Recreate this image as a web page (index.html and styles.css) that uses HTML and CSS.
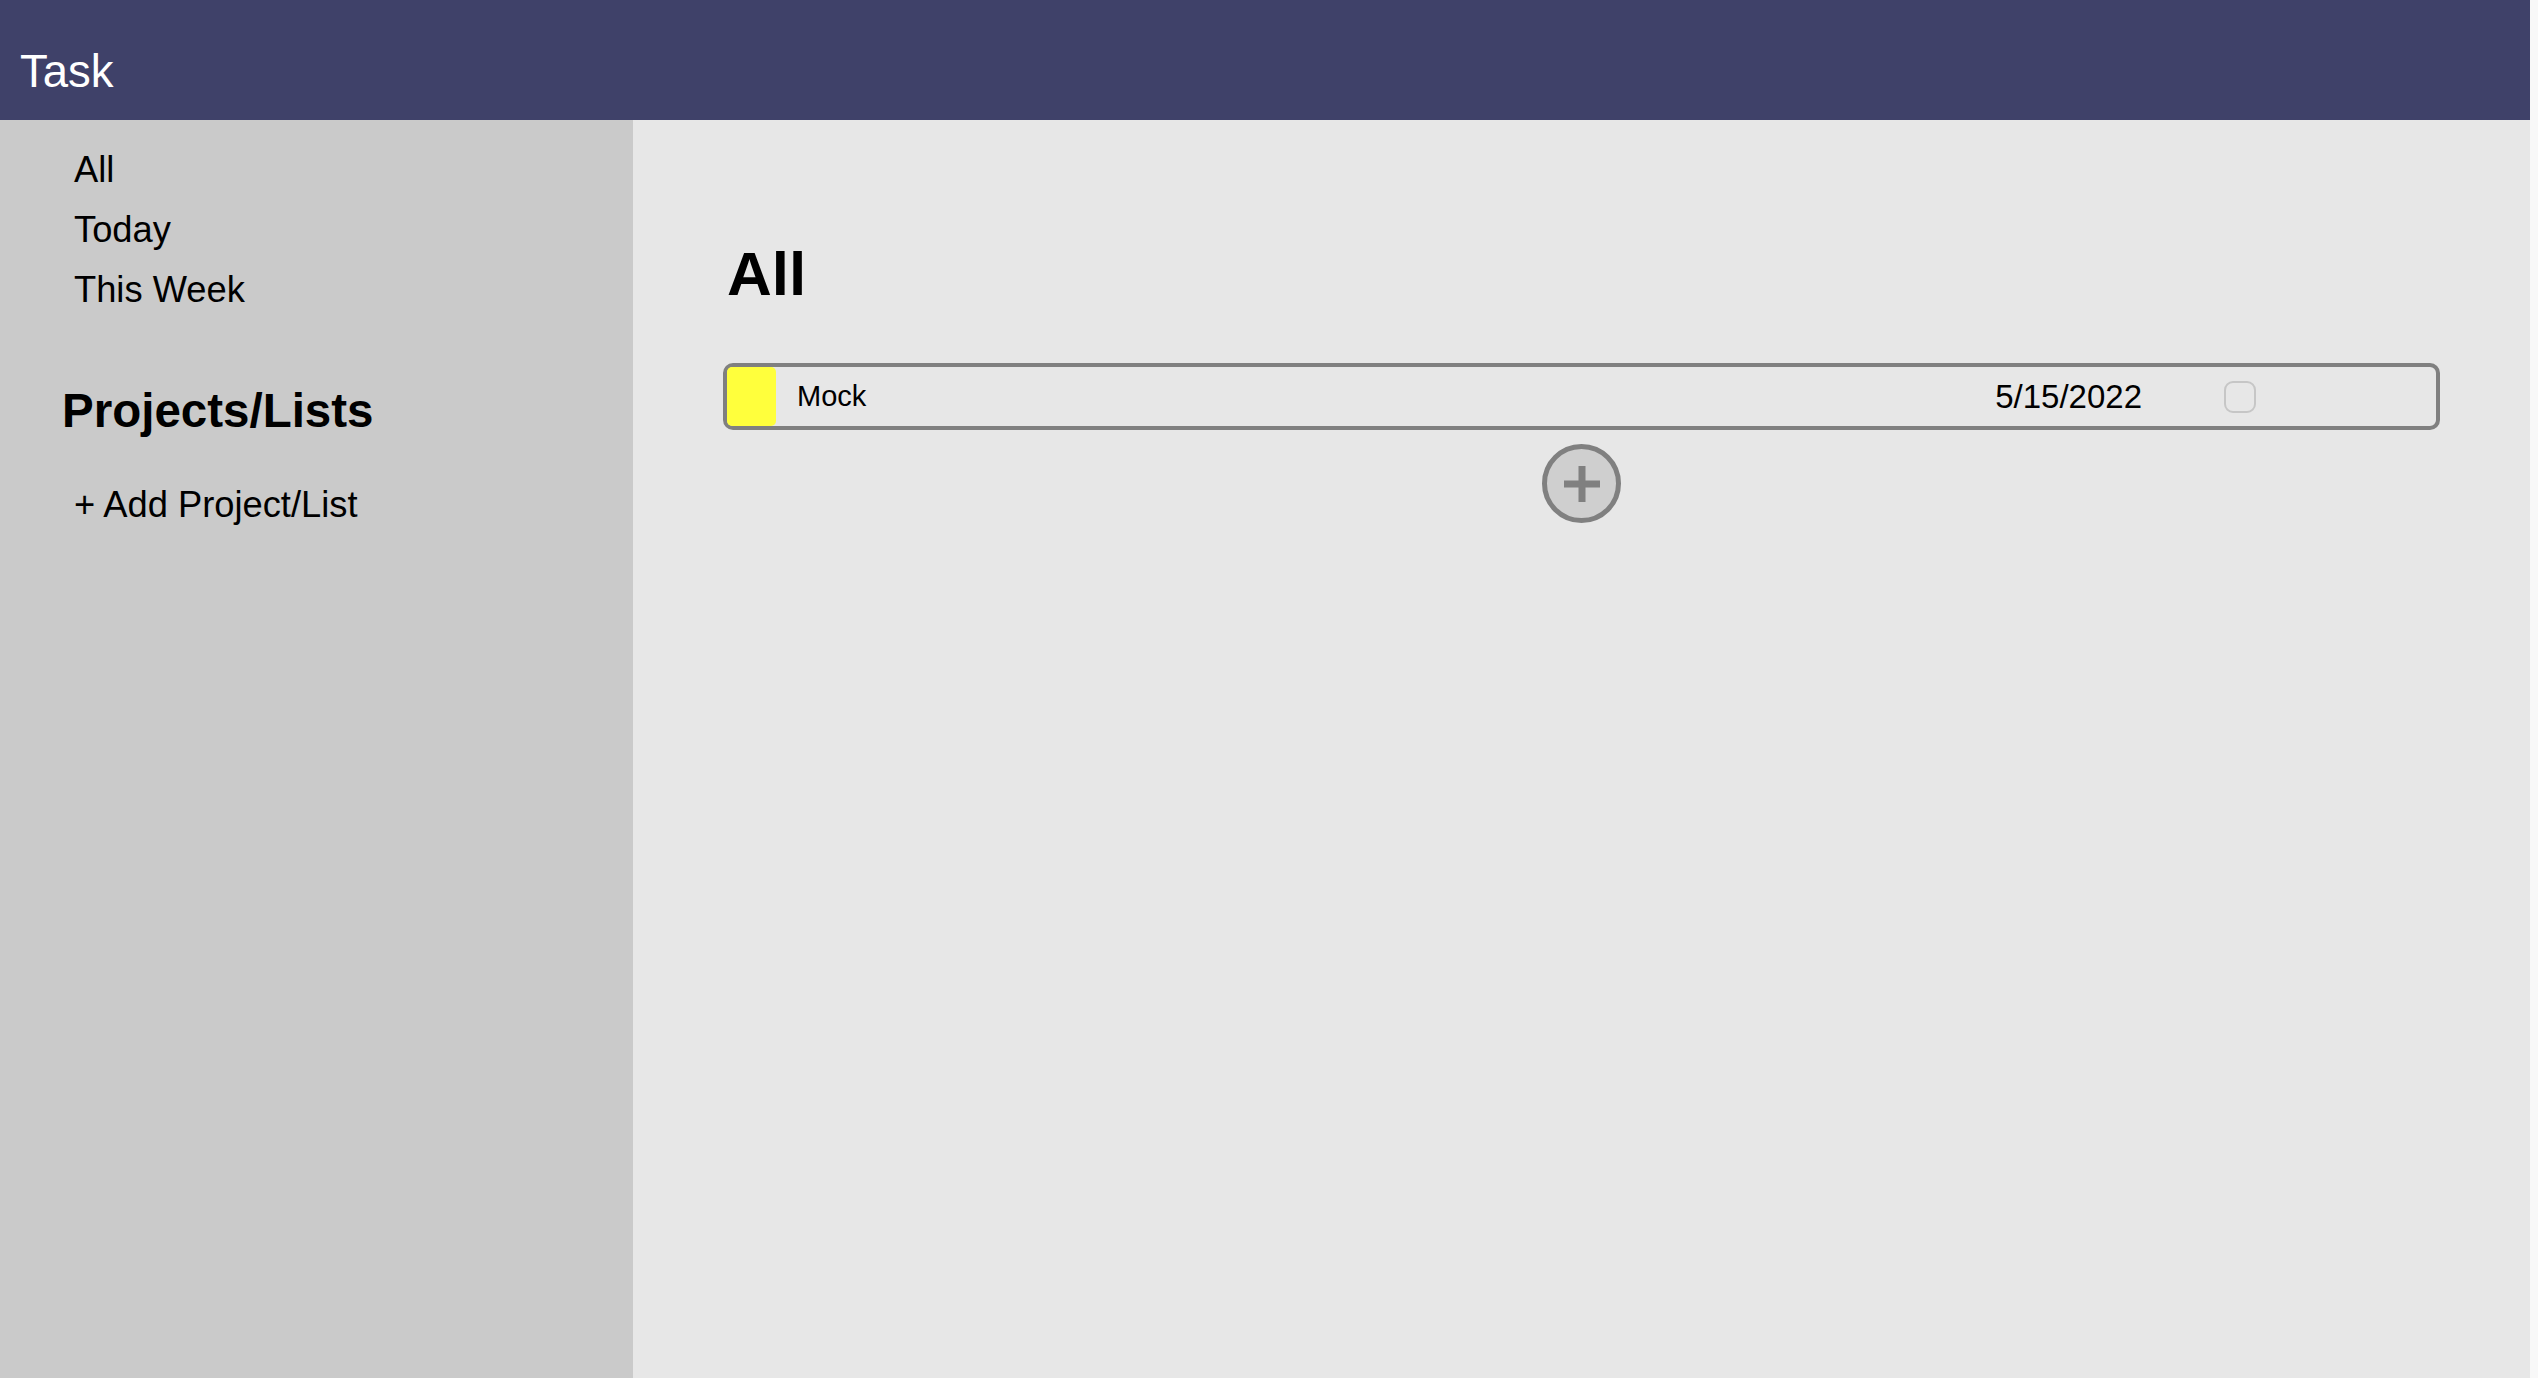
FILE: index.html
```html
<!DOCTYPE html>
<html lang="en">
<head>
<meta charset="utf-8">
<title>Task</title>
<link rel="stylesheet" href="styles.css">
</head>
<body>
<div class="app">
  <header class="topbar">
    <div class="brand">Task</div>
  </header>
  <div class="layout">
    <aside class="sidebar">
      <ul class="nav">
        <li class="nav-item">All</li>
        <li class="nav-item">Today</li>
        <li class="nav-item">This Week</li>
      </ul>
      <h2 class="section-title">Projects/Lists</h2>
      <div class="add-project">+ Add Project/List</div>
    </aside>
    <main class="content">
      <h1 class="page-title">All</h1>
      <div class="task-list">
        <div class="task">
          <div class="task-color"></div>
          <div class="task-name">Mock</div>
          <div class="task-date">5/15/2022</div>
          <input class="task-check" type="checkbox">
        </div>
      </div>
      <div class="add-task-row">
        <button class="add-task" type="button" aria-label="Add task">
          <svg class="add-icon" viewBox="0 0 36 36" width="36" height="36">
            <rect x="0" y="14.5" width="36" height="7" fill="#808080"/>
            <rect x="14.5" y="0" width="7" height="36" fill="#808080"/>
          </svg>
        </button>
      </div>
    </main>
  </div>
</div>
</body>
</html>
```

FILE: styles.css
```css
html {
  background: #f8f8f8;
}
body {
  margin: 0;
  font-family: "Liberation Sans", Arial, Helvetica, sans-serif;
  color: #000;
}
.app {
  width: calc(100% - 8px);
  height: 100vh;
  display: grid;
  grid-template-rows: 120px 1fr;
}
.topbar {
  background: #3f4169;
  color: #fff;
  padding: 24px 0 0 20px;
  box-sizing: border-box;
}
.brand {
  font-size: 45.5px;
  line-height: 96px;
}
.layout {
  display: grid;
  grid-template-columns: 633px 1fr;
  min-height: 0;
}
.sidebar {
  background: #cacaca;
  padding-top: 20px;
}
.nav {
  list-style: none;
  margin: 0;
  padding: 0 0 0 74px;
}
.nav-item {
  font-size: 36.3px;
  line-height: 60px;
}
.section-title {
  margin: 61px 0 0 62px;
  font-size: 47.5px;
  line-height: 60px;
  font-weight: bold;
}
.add-project {
  margin-top: 34px;
  padding-left: 74px;
  font-size: 36.3px;
  line-height: 60px;
}
.content {
  background: #e7e7e7;
  padding: 118px 90px 0 90px;
}
.page-title {
  margin: 0;
  padding-left: 4px;
  font-size: 62px;
  line-height: 72px;
  font-weight: bold;
}
.task-list {
  margin-top: 53px;
}
.task {
  display: flex;
  align-items: center;
  height: 67px;
  box-sizing: border-box;
  border: 4px solid #808080;
  border-radius: 10px;
}
.task-color {
  width: 49px;
  height: 59px;
  background: #ffff3c;
  border-radius: 5px;
}
.task-name {
  flex: 1;
  margin-left: 21px;
  font-size: 29px;
}
.task-date {
  font-size: 33px;
}
.task-check {
  appearance: none;
  -webkit-appearance: none;
  width: 32px;
  height: 32px;
  margin: 0 180px 0 82px;
  box-sizing: border-box;
  border: 2px solid #c6c6c6;
  border-radius: 9px;
  background: transparent;
}
.add-task-row {
  display: flex;
  justify-content: center;
  margin-top: 14px;
}
.add-task {
  width: 79px;
  height: 79px;
  box-sizing: border-box;
  border: 5px solid #808080;
  border-radius: 50%;
  background: #cfcfcf;
  padding: 0;
  display: flex;
  align-items: center;
  justify-content: center;
}
.add-icon {
  display: block;
}
```
